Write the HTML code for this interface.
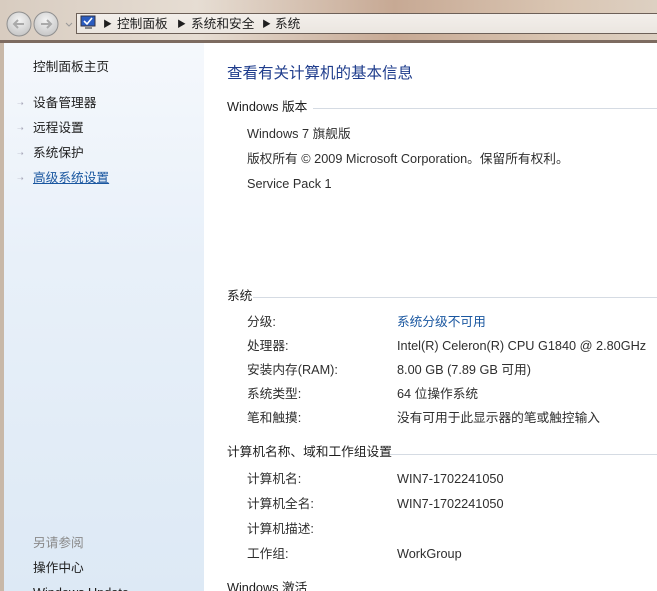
<!DOCTYPE html>
<html><head><meta charset="utf-8"><style>
body{margin:0;width:657px;height:591px;overflow:hidden;position:relative;font-family:"Liberation Sans","Noto Sans CJK SC",sans-serif;font-size:12.7px;color:#1e1e1e;background:#fff}
#wrap{position:absolute;left:0;top:0;width:657px;height:591px;overflow:hidden}
.a{position:absolute;white-space:nowrap;line-height:16px}
#top{position:absolute;left:0;top:0;width:657px;height:43px;background:linear-gradient(90deg,#d8ccc0 0%,#e6ddd3 30%,#c7a994 60%,#d9c5b2 85%,#ddd0c2 100%)}
#addr{position:absolute;left:76px;top:13px;width:581px;height:21px;border:1px solid #6d6058;border-right:none;background:linear-gradient(#f3efeb,#ebe6e0);box-sizing:border-box}
#left{position:absolute;left:0;top:43px;width:204px;height:548px;background:linear-gradient(180deg,#f5f8fc 0%,#e8f0f9 40%,#dde9f5 100%)}
#lframe{position:absolute;left:0;top:43px;width:4px;height:548px;background:#c8b8a8}
.h{position:absolute;height:1px;background:#d5dbe3}
.bl{color:#1a57a0}
.sub{color:#2e2e2e}
</style></head><body><div id="wrap">
<div id="top"></div>
<div style="position:absolute;left:0;top:40px;width:657px;height:3px;background:#7d6b60"></div>
<svg style="position:absolute;left:5px;top:10px" width="72" height="28">
<defs><radialGradient id="g" cx="50%" cy="35%" r="60%"><stop offset="0" stop-color="#f4f4f4"/><stop offset="1" stop-color="#c9c9c9"/></radialGradient></defs>
<circle cx="14" cy="14" r="12" fill="url(#g)" stroke="#8f8f8f"/>
<circle cx="41" cy="14" r="12" fill="url(#g)" stroke="#8f8f8f"/>
<path d="M19 14H9M13 10l-4 4 4 4" stroke="#aaa" stroke-width="2" fill="none"/>
<path d="M36 14h10M42 10l4 4-4 4" stroke="#aaa" stroke-width="2" fill="none"/>
<path d="M61 13l3 3 3-3" stroke="#999" fill="none"/>
</svg>
<div id="addr"></div>
<svg style="position:absolute;left:79px;top:15px" width="18" height="16"><rect x="2" y="1" width="14" height="10" fill="#2a5cc0" stroke="#334"/><path d="M5 6l3 3 5-6" stroke="#fff" stroke-width="1.6" fill="none"/><rect x="6" y="12" width="7" height="2" fill="#888"/></svg>
<div class="a" style="left:103px;top:16px;font-size:9px">▶</div>
<div class="a" style="left:117px;top:16px">控制面板</div>
<div class="a" style="left:177px;top:16px;font-size:9px">▶</div>
<div class="a" style="left:191px;top:16px">系统和安全</div>
<div class="a" style="left:262px;top:16px;font-size:9px">▶</div>
<div class="a" style="left:275px;top:16px">系统</div>
<div id="left"></div><div id="lframe"></div>
<div class="a" style="left:33px;top:59px">控制面板主页</div>
<div class="a" style="left:33px;top:95px">设备管理器</div>
<div class="a" style="left:33px;top:120px">远程设置</div>
<div class="a" style="left:33px;top:145px">系统保护</div>
<div class="a bl" style="left:33px;top:170px;text-decoration:underline">高级系统设置</div>
<div class="a" style="left:17px;top:96px;color:#aab;font-size:8px">➝</div>
<div class="a" style="left:17px;top:121px;color:#aab;font-size:8px">➝</div>
<div class="a" style="left:17px;top:146px;color:#aab;font-size:8px">➝</div>
<div class="a" style="left:17px;top:171px;color:#aab;font-size:8px">➝</div>
<div class="a" style="left:33px;top:535px;color:#8a8a8a">另请参阅</div>
<div class="a" style="left:33px;top:560px">操作中心</div>
<div class="a" style="left:33px;top:585px">Windows Update</div>

<div class="a" style="left:227px;top:64px;font-size:15.5px;line-height:20px;color:#1e3c8c">查看有关计算机的基本信息</div>
<div class="a" style="left:227px;top:99px">Windows 版本</div><div class="h" style="left:313px;top:108px;width:344px"></div>
<div class="a sub" style="left:247px;top:126px">Windows 7 旗舰版</div>
<div class="a sub" style="left:247px;top:151px">版权所有 © 2009 Microsoft Corporation。保留所有权利。</div>
<div class="a sub" style="left:247px;top:176px">Service Pack 1</div>
<div class="a" style="left:227px;top:288px">系统</div><div class="h" style="left:253px;top:297px;width:404px"></div>
<div class="a sub" style="left:247px;top:314px">分级:</div><div class="a bl" style="left:397px;top:314px">系统分级不可用</div>
<div class="a sub" style="left:247px;top:338px">处理器:</div><div class="a sub" style="left:397px;top:338px">Intel(R) Celeron(R) CPU G1840 @ 2.80GHz &nbsp; 2.80 GHz</div>
<div class="a sub" style="left:247px;top:362px">安装内存(RAM):</div><div class="a sub" style="left:397px;top:362px">8.00 GB (7.89 GB 可用)</div>
<div class="a sub" style="left:247px;top:386px">系统类型:</div><div class="a sub" style="left:397px;top:386px">64 位操作系统</div>
<div class="a sub" style="left:247px;top:410px">笔和触摸:</div><div class="a sub" style="left:397px;top:410px">没有可用于此显示器的笔或触控输入</div>
<div class="a" style="left:227px;top:444px">计算机名称、域和工作组设置</div><div class="h" style="left:390px;top:454px;width:267px"></div>
<div class="a sub" style="left:247px;top:471px">计算机名:</div><div class="a sub" style="left:397px;top:471px">WIN7-1702241050</div>
<div class="a sub" style="left:247px;top:496px">计算机全名:</div><div class="a sub" style="left:397px;top:496px">WIN7-1702241050</div>
<div class="a sub" style="left:247px;top:521px">计算机描述:</div>
<div class="a sub" style="left:247px;top:546px">工作组:</div><div class="a sub" style="left:397px;top:546px">WorkGroup</div>
<div class="a" style="left:227px;top:580px">Windows 激活</div>
</div></body></html>
